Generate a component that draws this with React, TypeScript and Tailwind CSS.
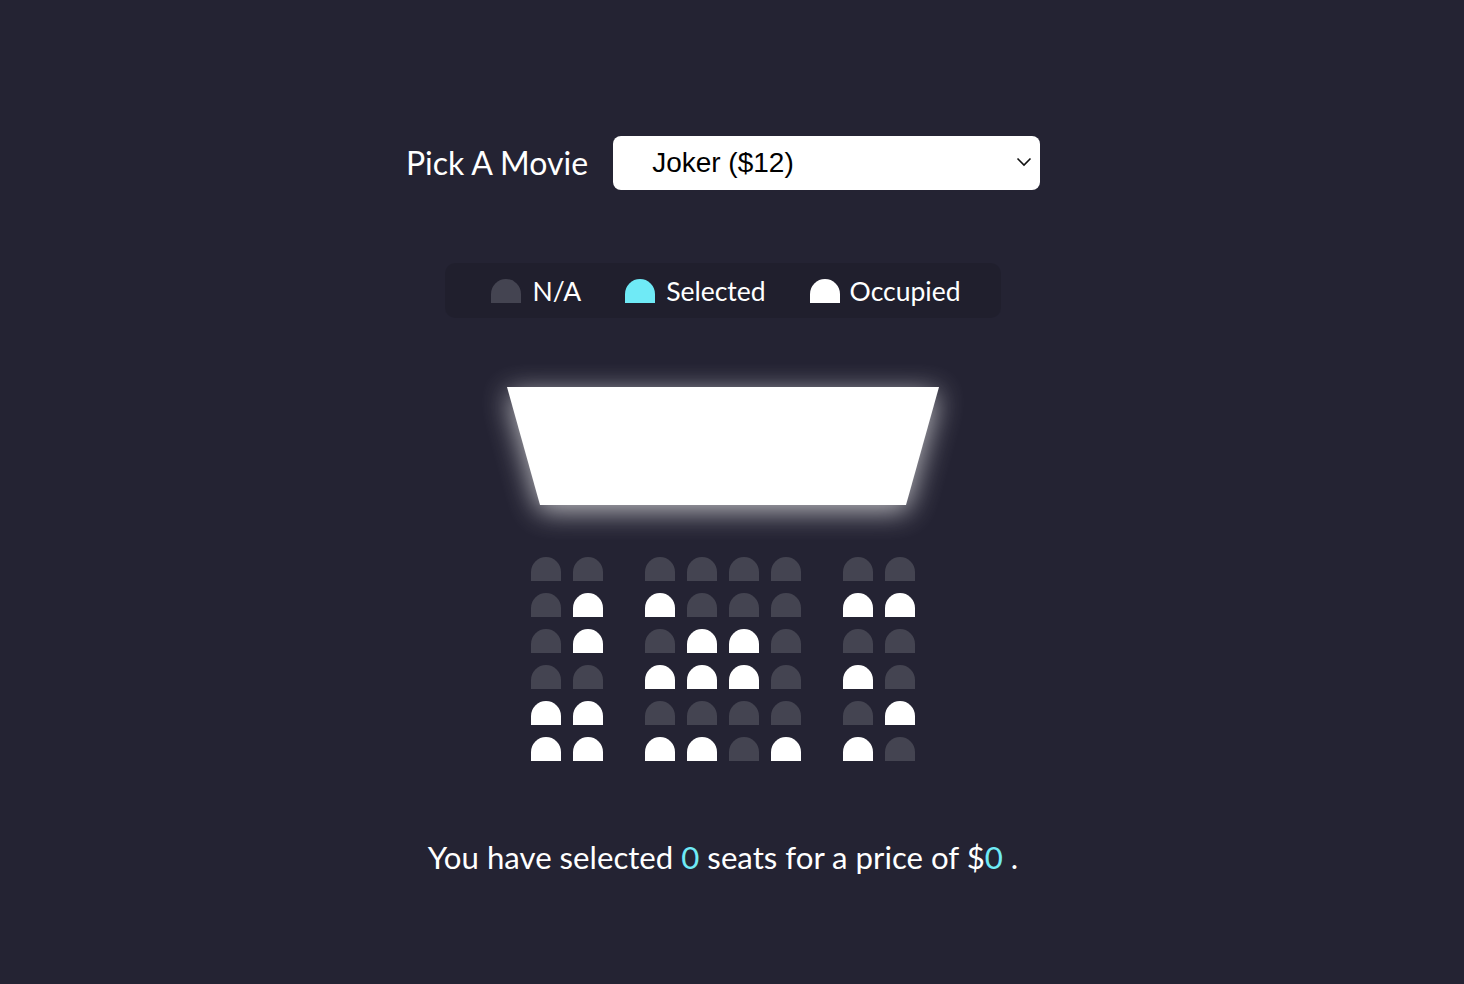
import React from "react";

type SeatState = "na" | "selected" | "occupied";

const rows: number[][] = [
  [0, 0, 0, 0, 0, 0, 0, 0],
  [0, 1, 1, 0, 0, 0, 1, 1],
  [0, 1, 0, 1, 1, 0, 0, 0],
  [0, 0, 1, 1, 1, 0, 1, 0],
  [1, 1, 0, 0, 0, 0, 0, 1],
  [1, 1, 1, 1, 0, 1, 1, 0],
];

function Seat({ state }: { state: SeatState }) {
  const color =
    state === "occupied"
      ? "bg-white"
      : state === "selected"
      ? "bg-[#6feaf6]"
      : "bg-[#444451]";
  return <div className={`w-[30px] h-[24px] rounded-t-[20px] ${color}`} />;
}

export default function App() {
  return (
    <div
      className="min-h-screen w-full bg-[#242333] text-white pr-[18px] flex flex-col items-center"
      style={{ fontFamily: "Lato, 'Noto Sans', sans-serif" }}
    >
      <div className="mt-[136px] flex items-center gap-[25px]">
        <label className="text-[32px] leading-[38px]">Pick A Movie</label>
        <div className="relative">
          <select
            defaultValue="12"
            className="appearance-none w-[427px] h-[54px] bg-white text-black rounded-[8px] pl-[39px] pr-[40px] text-[28px] outline-none"
            style={{ fontFamily: "'Liberation Sans', Arial, sans-serif" }}
          >
            <option value="12">Joker ($12)</option>
            <option value="10">Avengers: Endgame ($10)</option>
            <option value="8">Toy Story 4 ($8)</option>
            <option value="9">The Lion King ($9)</option>
          </select>
          <svg
            className="pointer-events-none absolute right-[8px] top-[20px]"
            width="16"
            height="12"
            viewBox="0 0 16 12"
            fill="none"
          >
            <path d="M1.5 2.5 L8 9 L14.5 2.5" stroke="#111" strokeWidth="1.6" />
          </svg>
        </div>
      </div>

      <ul className="mt-[73px] h-[55px] flex items-center gap-[44px] pl-[46px] pr-[40px] rounded-[10px] bg-black/10">
        <li className="flex items-center gap-[11px]">
          <Seat state="na" />
          <span className="text-[26.5px] leading-[34px]">N/A</span>
        </li>
        <li className="flex items-center gap-[11px]">
          <Seat state="selected" />
          <span className="text-[26.5px] leading-[34px]">Selected</span>
        </li>
        <li className="flex items-center gap-[10px]">
          <Seat state="occupied" />
          <span className="text-[26.5px] leading-[34px]">Occupied</span>
        </li>
      </ul>

      <div className="mt-[69px] drop-shadow-[0_6px_14px_rgba(255,255,255,0.7)]">
        <div className="w-[432px] h-[118px] bg-white [clip-path:polygon(0_0,100%_0,calc(100%-33px)_100%,33px_100%)]" />
      </div>

      <div className="mt-[52px] flex flex-col gap-[12px]">
        {rows.map((row, r) => (
          <div key={r} className="flex">
            {row.map((v, c) => (
              <div
                key={c}
                className={c === 1 || c === 5 ? "mr-[42px]" : c === 7 ? "" : "mr-[12px]"}
              >
                <Seat state={v ? "occupied" : "na"} />
              </div>
            ))}
          </div>
        ))}
      </div>

      <p className="mt-[77px] text-[31.2px] leading-[38px]">
        You have selected <span className="text-[#6feaf6]">0</span> seats for a price of $
        <span className="text-[#6feaf6]">0</span> .
      </p>
    </div>
  );
}
